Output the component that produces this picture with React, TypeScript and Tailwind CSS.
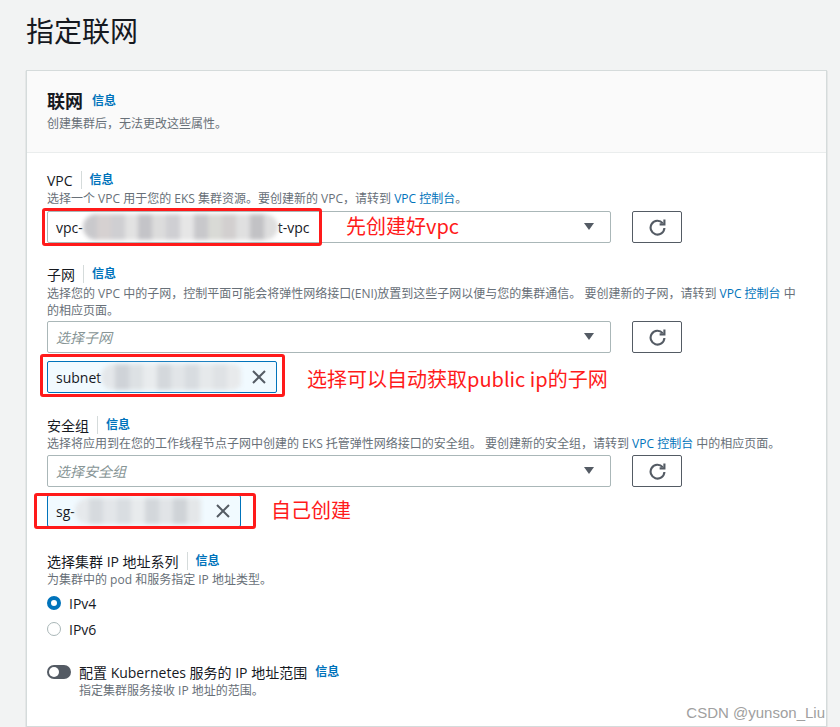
import React from "react";

const FONT = "font-['Open_Sans','Noto_Sans_CJK_SC',sans-serif]";
const CJK = "font-['Noto_Sans_CJK_SC','Noto_Sans',sans-serif]";

function Info() {
  return <span className="text-[12px] font-bold text-[#0073bb] leading-5">信息</span>;
}

function Label({ text }: { text: string }) {
  return (
    <div className="flex items-center h-5 text-[14px] text-[#16191f]">
      <span>{text}</span>
      <span className="ml-2 mr-2 h-[18px] w-px bg-[#d5dbdb]" />
      <Info />
    </div>
  );
}

// pixelated blur that hides the ids in the screenshot
function Mosaic({ shades }: { shades: string[] }) {
  return (
    <div className="flex h-[26px] items-stretch blur-[2px] rounded-full overflow-hidden">
      {shades.map((c, i) => (
        <div key={i} className="w-[14px]" style={{ background: c }} />
      ))}
    </div>
  );
}

function Caret() {
  return (
    <svg width="12" height="8" viewBox="0 0 12 8" className="fill-[#545b64]">
      <path d="M1 0h10L6 7z" />
    </svg>
  );
}

function Refresh() {
  return (
    <button className="w-[50px] h-[32px] border border-[#545b64] rounded-[2px] bg-white flex items-center justify-center">
      <svg width="17" height="17" viewBox="0 0 16 16" fill="none" stroke="#545b64" strokeWidth="2">
        <path d="M10 5h4.5V0.5" />
        <path d="M14.5 8.5a6.5 6.5 0 1 1-1.6-4.6" />
      </svg>
    </button>
  );
}

function Close() {
  return (
    <svg width="14" height="14" viewBox="0 0 14 14" stroke="#545b64" strokeWidth="2">
      <path d="M1 1l12 12M13 1L1 13" />
    </svg>
  );
}

function SelectRow({ children }: { children: React.ReactNode }) {
  return (
    <div className="flex items-center gap-[21px]">
      <div className="relative w-[564px] h-[32px] border border-[#aab7b8] rounded-[2px] bg-white flex items-center justify-between pl-[8px] pr-[15px]">
        {children}
        <Caret />
      </div>
      <Refresh />
    </div>
  );
}

function Token({ prefix, width, shades }: { prefix: string; width: string; shades: string[] }) {
  return (
    <div className={`${width} h-[32px] border border-[#0073bb] rounded-[2px] bg-[#f1faff] flex items-center pl-[8px] pr-[10px]`}>
      <span className="text-[14px] text-[#16191f]">{prefix}</span>
      <div className="flex-1">
        <Mosaic shades={shades} />
      </div>
      <span className="ml-2">
        <Close />
      </span>
    </div>
  );
}

export default function App() {
  return (
    <div className={`${FONT} relative min-h-[727px] w-[840px] bg-[#f2f3f3] pb-[5px] overflow-hidden`}>
      <h1 className={`${CJK} pl-[26px] pt-[12px] text-[28px] leading-[36px] font-normal text-[#16191f]`}>指定联网</h1>

      <div className="relative ml-[26px] mt-[22px] w-[801px] bg-white border border-[#d5dbdb] shadow-[0_1px_1px_rgba(0,28,36,0.3)]">
        {/* header */}
        <div className="bg-[#fafafa] border-b border-[#eaeded] px-5 pt-[18px] pb-[19px]">
          <div className="flex items-center gap-[9px] h-6">
            <span className="text-[18px] font-bold text-[#16191f]">联网</span>
            <Info />
          </div>
          <p className="mt-[2px] text-[12px] leading-[18px] text-[#687078]">创建集群后，无法更改这些属性。</p>
        </div>

        <div className="px-5 pt-[17px] pb-[26px]">
          {/* VPC */}
          <Label text="VPC" />
          <p className="text-[12px] leading-[18px] text-[#687078]">
            选择一个 VPC 用于您的 EKS 集群资源。要创建新的 VPC，请转到 <span className="text-[#0073bb]">VPC 控制台</span>。
          </p>
          <div className="relative mt-[3px]">
            <SelectRow>
              <div className="flex items-center text-[14px] text-[#16191f]">
                <span>vpc-</span>
                <div className="w-[195px]">
                  <Mosaic shades={["#c9c9cc", "#d6d1d1", "#cfcfd2", "#e2e2e2", "#c4c4c8", "#dcdcdc", "#cfcfd3", "#e6e6e6", "#c8c8cb", "#d9dad6", "#d2cfcf", "#e0e0e0", "#c2c2c5", "#dedede"]} />
                </div>
                <span>t-vpc</span>
              </div>
            </SelectRow>
            <div className="absolute left-[-5px] top-[-3px] w-[280px] h-[38px] border-[3px] border-[#ff1a1a] rounded-[3px]" />
            <span className={`${CJK} absolute left-[299px] top-[1px] text-[20px] leading-[28px] text-[#ff1a1a]`}>先创建好vpc</span>
          </div>

          {/* subnets */}
          <div className="mt-[21px]">
            <Label text="子网" />
          </div>
          <p className="mt-px text-[12px] leading-[17px] text-[#687078] whitespace-nowrap">
            选择您的 VPC 中的子网，控制平面可能会将弹性网络接口(ENI)放置到这些子网以便与您的集群通信。 要创建新的子网，请转到 <span className="text-[#0073bb]">VPC 控制台</span> 中
            <br />
            的相应页面。
          </p>
          <div className="mt-[2px]">
            <SelectRow>
              <span className="text-[14px] italic text-[#879596]">选择子网</span>
            </SelectRow>
          </div>
          <div className="relative mt-[8px]">
            <Token prefix="subnet" width="w-[230px]" shades={["#e4e7ea", "#cfd3d8", "#dde1e4", "#e9ecee", "#d4d8dc", "#e2e5e8", "#d8dce0", "#e6e9eb", "#dfe2e5", "#e8eaec"]} />
            <div className="absolute left-[-7px] top-[-7px] w-[245px] h-[43px] border-[3px] border-[#ff1a1a] rounded-[3px]" />
            <span className={`${CJK} absolute left-[260px] top-[4px] text-[20px] leading-[28px] text-[#ff1a1a] whitespace-nowrap`}>
              选择可以自动获取public ip的子网
            </span>
          </div>

          {/* security groups */}
          <div className="mt-[22px]">
            <Label text="安全组" />
          </div>
          <p className="text-[12px] leading-[18px] text-[#687078] whitespace-nowrap">
            选择将应用到在您的工作线程节点子网中创建的 EKS 托管弹性网络接口的安全组。 要创建新的安全组，请转到 <span className="text-[#0073bb]">VPC 控制台</span> 中的相应页面。
          </p>
          <div className="mt-[2px]">
            <SelectRow>
              <span className="text-[14px] italic text-[#879596]">选择安全组</span>
            </SelectRow>
          </div>
          <div className="relative mt-[8px]">
            <Token prefix="sg-" width="w-[194px]" shades={["#e6e9ec", "#d6dade", "#e3e6e9", "#d9dde1", "#e8ebed", "#d3d7db", "#e1e4e7", "#cfd3d7", "#e4e7e9"]} />
            <div className="absolute left-[-13px] top-[-2px] w-[222px] h-[36px] border-[3px] border-[#ff1a1a] rounded-[3px]" />
            <span className={`${CJK} absolute left-[224px] top-[1px] text-[20px] leading-[28px] text-[#ff1a1a]`}>自己创建</span>
          </div>

          {/* IP family */}
          <div className="mt-[24px]">
            <Label text="选择集群 IP 地址系列" />
          </div>
          <p className="text-[12px] leading-[18px] text-[#687078]">为集群中的 pod 和服务指定 IP 地址类型。</p>
          <div className="mt-[1px] flex flex-col">
            <label className="flex items-center gap-[8px] h-[26px] text-[14px] text-[#16191f]">
              <span className="w-[14px] h-[14px] rounded-full border-[4px] border-[#0073bb] bg-white" />
              IPv4
            </label>
            <label className="flex items-center gap-[8px] h-[26px] text-[14px] text-[#16191f]">
              <span className="w-[14px] h-[14px] rounded-full border border-[#aab7b8] bg-white" />
              IPv6
            </label>
          </div>

          {/* service IP range toggle */}
          <div className="mt-[20px] flex items-start gap-[8px]">
            <span className="mt-[3px] w-[24px] h-[14px] rounded-full bg-[#545b64] flex items-center px-[2px]">
              <span className="w-[10px] h-[10px] rounded-full bg-white" />
            </span>
            <div>
              <div className="flex items-center gap-[8px] h-5 text-[14px] text-[#16191f]">
                <span>配置 Kubernetes 服务的 IP 地址范围</span>
                <Info />
              </div>
              <p className="text-[12px] leading-[18px] text-[#687078]">指定集群服务接收 IP 地址的范围。</p>
            </div>
          </div>
        </div>

        <span className="absolute right-[1px] bottom-[2px] text-[15px] text-[#a0a0a0] font-['Liberation_Sans',sans-serif]">
          CSDN @yunson_Liu
        </span>
      </div>
    </div>
  );
}
